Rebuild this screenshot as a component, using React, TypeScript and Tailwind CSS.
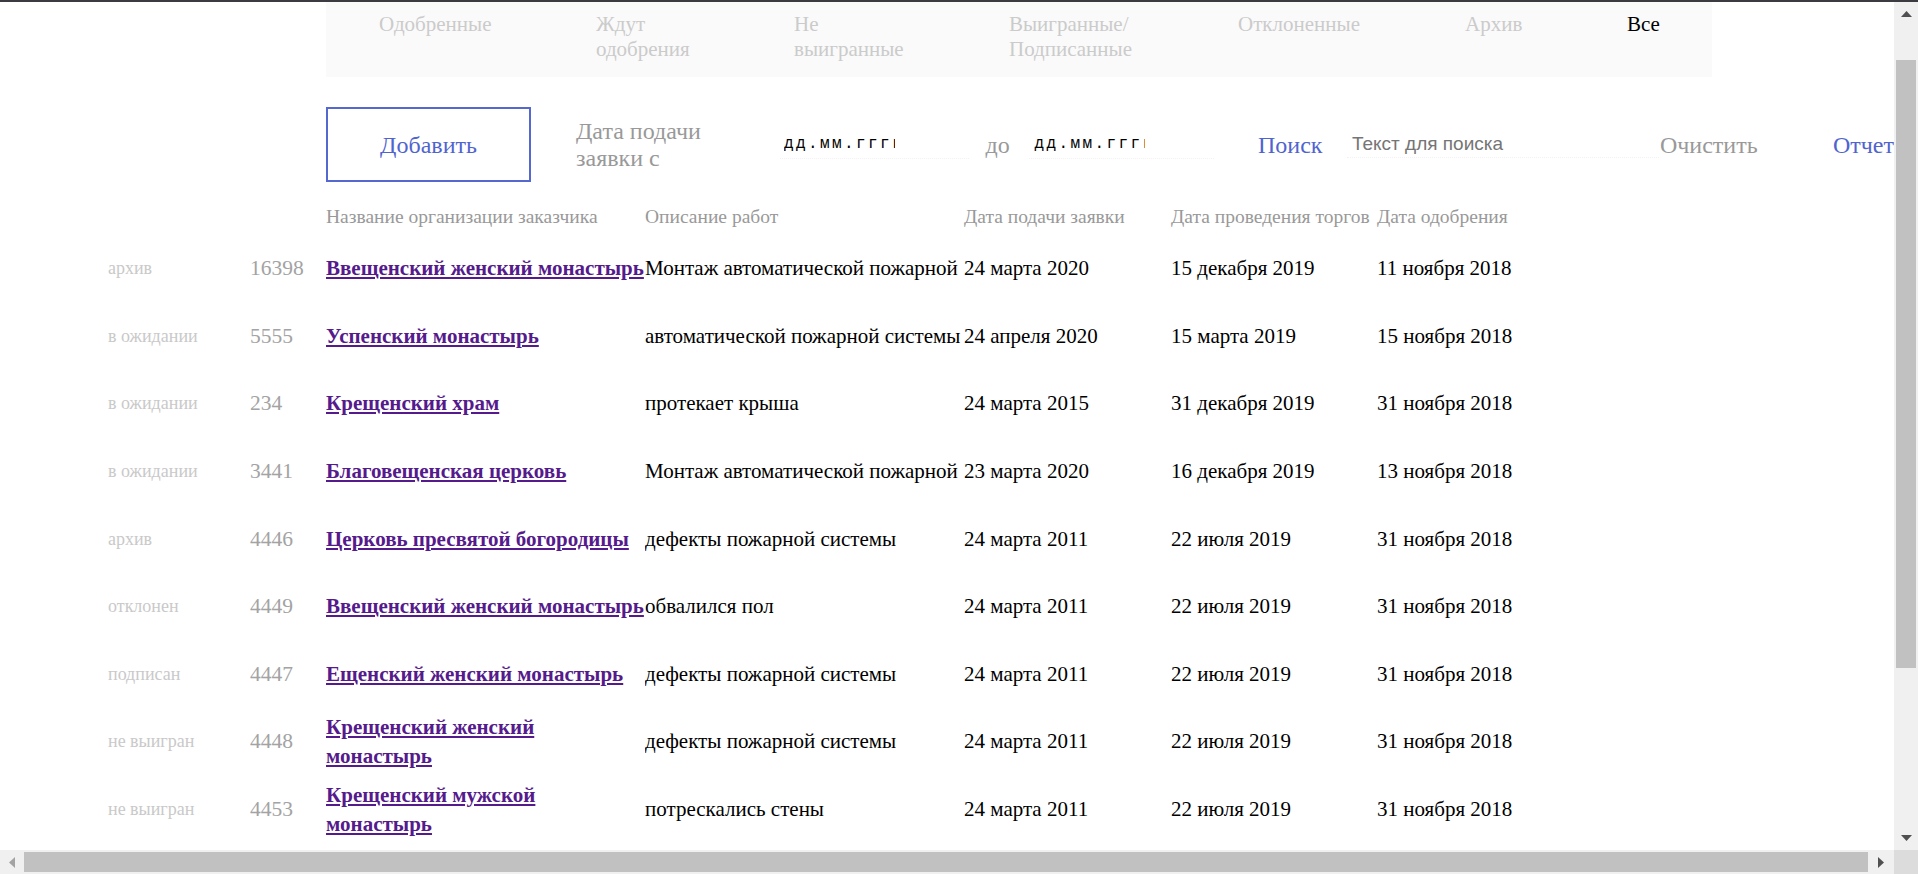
type Row = {
  status: string;
  num: string;
  name: string[];
  desc: string;
  filed: string;
  auction: string;
  approved: string;
};

const tabs = [
  { label: ["Одобренные"], w: "w-[217px]" },
  { label: ["Ждут", "одобрения"], w: "w-[198px]" },
  { label: ["Не", "выигранные"], w: "w-[215px]" },
  { label: ["Выигранные/", "Подписанные"], w: "w-[229px]" },
  { label: ["Отклоненные"], w: "w-[227px]" },
  { label: ["Архив"], w: "w-[162px]" },
];

const rows: Row[] = [
  { status: "архив", num: "16398", name: ["Ввещенский женский монастырь"], desc: "Монтаж автоматической пожарной", filed: "24 марта 2020", auction: "15 декабря 2019", approved: "11 ноября 2018" },
  { status: "в ожидании", num: "5555", name: ["Успенский монастырь"], desc: "автоматической пожарной системы", filed: "24 апреля 2020", auction: "15 марта 2019", approved: "15 ноября 2018" },
  { status: "в ожидании", num: "234", name: ["Крещенский храм"], desc: "протекает крыша", filed: "24 марта 2015", auction: "31 декабря 2019", approved: "31 ноября 2018" },
  { status: "в ожидании", num: "3441", name: ["Благовещенская церковь"], desc: "Монтаж автоматической пожарной", filed: "23 марта 2020", auction: "16 декабря 2019", approved: "13 ноября 2018" },
  { status: "архив", num: "4446", name: ["Церковь пресвятой богородицы"], desc: "дефекты пожарной системы", filed: "24 марта 2011", auction: "22 июля 2019", approved: "31 ноября 2018" },
  { status: "отклонен", num: "4449", name: ["Ввещенский женский монастырь"], desc: "обвалился пол", filed: "24 марта 2011", auction: "22 июля 2019", approved: "31 ноября 2018" },
  { status: "подписан", num: "4447", name: ["Ещенский женский монастырь"], desc: "дефекты пожарной системы", filed: "24 марта 2011", auction: "22 июля 2019", approved: "31 ноября 2018" },
  { status: "не выигран", num: "4448", name: ["Крещенский женский", "монастырь"], desc: "дефекты пожарной системы", filed: "24 марта 2011", auction: "22 июля 2019", approved: "31 ноября 2018" },
  { status: "не выигран", num: "4453", name: ["Крещенский мужской", "монастырь"], desc: "потрескались стены", filed: "24 марта 2011", auction: "22 июля 2019", approved: "31 ноября 2018" },
];

function DateField({ w, pl }: { w: string; pl: string }) {
  return (
    <div className={`${w} ${pl} h-[28px] flex items-center border-b border-dotted border-[#f2f2f2]`}>
      <span className="block w-[111px] overflow-hidden whitespace-nowrap font-['Liberation_Mono',monospace] text-[16px] tracking-[2.4px] text-black">
        дд.мм.гггг
      </span>
    </div>
  );
}

function Arrow({ dir, color }: { dir: "up" | "down" | "left" | "right"; color: string }) {
  const pts = {
    up: "0,6 5.5,0 11,6",
    down: "0,0 5.5,6 11,0",
    left: "6,0 0,5.5 6,11",
    right: "0,0 6,5.5 0,11",
  }[dir];
  const vertical = dir === "up" || dir === "down";
  return (
    <svg width={vertical ? 11 : 6} height={vertical ? 6 : 11} viewBox={vertical ? "0 0 11 6" : "0 0 6 11"}>
      <polygon points={pts} fill={color} />
    </svg>
  );
}

export default function App() {
  return (
    <div className="h-[874px] w-[1918px] overflow-hidden flex flex-col bg-white font-['Liberation_Serif',serif]">
      <div className="h-[2px] bg-[#3c3b42]" />
      <div className="flex flex-1 min-h-0">
        <main className="flex-1 min-w-0 overflow-hidden">
          {/* status tabs */}
          <div className="ml-[326px] w-[1386px] h-[75px] bg-[#fafafa] flex pt-[10px] pl-[53px] text-[21px] leading-[25px] text-[#cbcbcb]">
            {tabs.map((t) => (
              <div key={t.label.join()} className={`${t.w} shrink-0`}>
                {t.label.map((l) => (
                  <div key={l}>{l}</div>
                ))}
              </div>
            ))}
            <div className="text-black">Все</div>
          </div>

          {/* controls */}
          <div className="mt-[30px] ml-[326px] h-[75px] flex items-center whitespace-nowrap text-[24px]">
            <button className="w-[205px] h-[75px] shrink-0 border-2 border-[#5468cf] text-[#5064cf] flex items-center justify-center">
              Добавить
            </button>
            <div className="ml-[45px] w-[204px] shrink-0 leading-[27px] text-[#999999]">
              Дата подачи
              <br />
              заявки с
            </div>
            <DateField w="w-[190px]" pl="pl-[4px]" />
            <div className="ml-[16px] w-[44px] shrink-0 text-[#999999]">до</div>
            <DateField w="w-[185px]" pl="pl-[5px]" />
            <div className="ml-[44px] w-[89px] shrink-0 text-[#5064cf]">Поиск</div>
            <div className="w-[312px] h-[26px] shrink-0 pl-[5px] flex items-center border-b border-dotted border-[#f2f2f2] font-['Liberation_Sans',sans-serif] text-[19px] text-[#757575]">
              Текст для поиска
            </div>
            <div className="ml-[1px] w-[173px] shrink-0 text-[#999999]">Очистить</div>
            <div className="text-[#5064cf]">Отчет</div>
          </div>

          {/* table head */}
          <div className="mt-[16px] pl-[326px] h-[37px] flex items-center whitespace-nowrap text-[19.5px] text-[#999999]">
            <div className="w-[319px] shrink-0">Название организации заказчика</div>
            <div className="w-[319px] shrink-0">Описание работ</div>
            <div className="w-[207px] shrink-0">Дата подачи заявки</div>
            <div className="w-[206px] shrink-0">Дата проведения торгов</div>
            <div>Дата одобрения</div>
          </div>

          {/* rows */}
          {rows.map((r) => (
            <div key={r.num} className="h-[67.6px] pl-[108px] flex items-center whitespace-nowrap text-[21px] leading-[29px] text-black">
              <div className="w-[142px] shrink-0 text-[18px] text-[#c9c9c9]">{r.status}</div>
              <div className="w-[76px] shrink-0 text-[21.5px] text-[#a3a3a3]">{r.num}</div>
              <div className="w-[319px] shrink-0">
                <a href="#" className="font-bold text-[#551a8b] underline">
                  {r.name.map((n, i) => (
                    <span key={i}>
                      {i > 0 && <br />}
                      {n}
                    </span>
                  ))}
                </a>
              </div>
              <div className="w-[319px] shrink-0 overflow-hidden">{r.desc}</div>
              <div className="w-[207px] shrink-0">{r.filed}</div>
              <div className="w-[206px] shrink-0">{r.auction}</div>
              <div>{r.approved}</div>
            </div>
          ))}
        </main>

        {/* vertical scrollbar */}
        <div className="w-[24px] shrink-0 bg-[#f0f0f0] flex flex-col">
          <div className="h-[24px] flex items-center justify-center">
            <Arrow dir="up" color="#505050" />
          </div>
          <div className="h-[34px]" />
          <div className="h-[608px] mx-[2px] bg-[#c1c1c1]" />
          <div className="flex-1" />
          <div className="h-[24px] flex items-center justify-center">
            <Arrow dir="down" color="#505050" />
          </div>
        </div>
      </div>

      {/* horizontal scrollbar */}
      <div className="h-[24px] flex bg-[#f0f0f0]">
        <div className="w-[24px] flex items-center justify-center">
          <Arrow dir="left" color="#a3a3a3" />
        </div>
        <div className="flex-1 my-[2px] bg-[#c1c1c1]" />
        <div className="w-[26px] flex items-center justify-center">
          <Arrow dir="right" color="#505050" />
        </div>
        <div className="w-[24px] bg-[#dcdcdc]" />
      </div>
    </div>
  );
}
